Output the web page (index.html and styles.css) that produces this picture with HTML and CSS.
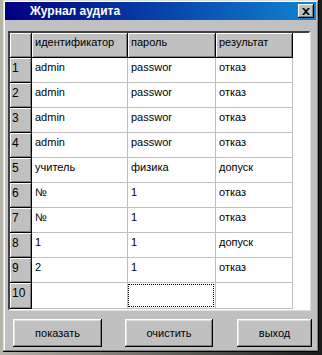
FILE: index.html
```html
<!DOCTYPE html>
<html lang="ru">
<head>
    <meta charset="UTF-8">
    <title>Журнал аудита</title>
    <link rel="stylesheet" href="styles.css">
</head>
<body>

    <div class="window">
        <div class="titlebar">
            <span class="title">Журнал аудита</span>
            <button class="close">
                <svg width="8" height="7" viewBox="0 0 8 7"><path d="M0 0h2l2 2 2-2h2L5 3.5 8 7H6L4 5 2 7H0l3-3.5z" fill="#000"/></svg>
            </button>
        </div>

        <div class="grid">
            <table>
                <tr>
                    <th class="num"></th>
                    <th class="c1">идентификатор</th>
                    <th class="c2">пароль</th>
                    <th class="c3">результат</th>
                </tr>
                <tr><th class="num">1</th><td>admin</td><td>passwor</td><td>отказ</td></tr>
                <tr><th class="num">2</th><td>admin</td><td>passwor</td><td>отказ</td></tr>
                <tr><th class="num">3</th><td>admin</td><td>passwor</td><td>отказ</td></tr>
                <tr><th class="num">4</th><td>admin</td><td>passwor</td><td>отказ</td></tr>
                <tr><th class="num">5</th><td>учитель</td><td>физика</td><td>допуск</td></tr>
                <tr><th class="num">6</th><td>№</td><td>1</td><td>отказ</td></tr>
                <tr><th class="num">7</th><td>№</td><td>1</td><td>отказ</td></tr>
                <tr><th class="num">8</th><td>1</td><td>1</td><td>допуск</td></tr>
                <tr><th class="num">9</th><td>2</td><td>1</td><td>отказ</td></tr>
                <tr><th class="num">10</th><td></td><td class="focus"><div></div></td><td></td></tr>
            </table>
        </div>

        <div class="buttons">
            <button class="btn b1">показать</button>
            <button class="btn b2">очистить</button>
            <button class="btn b3">выход</button>
        </div>
    </div>

</body>
</html>
```

FILE: styles.css
```css
body {
    margin: 0;
    height: 355px;
    overflow: hidden;
    background: linear-gradient(90deg, #b4b4a8 0, #b4b4a8 3px, #1c1c1c 319px);
    font-family: "Liberation Sans", Arial, sans-serif;
    font-size: 11px;
    color: #000;
}

.window {
    margin-left: 3px;
    width: 316px;
    height: 352px;
    box-sizing: border-box;
    padding: 2px 3px 3px 2px;
    background: #c0c0c0;
    box-shadow: inset -1px -1px #000, inset 1px 1px #dfdfdf, inset -2px -2px #808080, inset 2px 2px #fff;
}

.titlebar {
    height: 18px;
    display: flex;
    align-items: center;
    justify-content: space-between;
    padding: 0 2px 0 25px;
    background: linear-gradient(90deg, #000080, #1084d0);
}

.title {
    color: #fff;
    font-weight: bold;
    font-size: 12px;
}

.close {
    width: 16px;
    height: 14px;
    padding: 0;
    border: none;
    background: #c0c0c0;
    display: flex;
    align-items: center;
    justify-content: center;
    box-shadow: inset -1px -1px #000, inset 1px 1px #fff, inset -2px -2px #808080;
}

.grid {
    margin: 11px 0 0 3px;
    width: 302px;
    height: 279px;
    box-sizing: border-box;
    background: #fff;
    border-top: 2px solid #404040;
    border-left: 2px solid #404040;
    border-right: 1px solid #fff;
    border-bottom: 1px solid #fff;
    box-shadow: 1px 1px #dfdfdf;
    overflow: hidden;
}

table {
    border-collapse: separate;
    border-spacing: 0;
    table-layout: fixed;
}

th, td {
    height: 24px;
    padding: 3px 0 0 3px;
    box-sizing: border-box;
    vertical-align: top;
    text-align: left;
    font-weight: normal;
    white-space: nowrap;
    overflow: hidden;
}

th {
    background: #c0c0c0;
    border-right: 1px solid #000;
    border-bottom: 1px solid #000;
    box-shadow: inset 1px 1px #fff, inset -1px -1px #808080;
}

td {
    border-right: 1px solid #c0c0c0;
    border-bottom: 1px solid #c0c0c0;
}

th, td {
    height: 25px;
}

.num { width: 22px; padding-left: 2px; font-size: 12px; }
.c1 { width: 96px; }
.c2 { width: 88px; }
.c3 { width: 77px; }

.focus {
    padding: 1px 1px 1px 0;
}

.focus div {
    height: 21px;
    border: 1px dotted #000;
}

.buttons {
    display: flex;
    margin-top: 9px;
    padding-left: 8px;
}

.btn {
    height: 28px;
    padding: 0;
    border: none;
    background: #c0c0c0;
    font-family: "Liberation Sans", Arial, sans-serif;
    font-size: 11px;
    color: #000;
    box-shadow: inset -1px -1px #000, inset 1px 1px #fff, inset -2px -2px #808080, inset 2px 2px #dfdfdf;
}

.b1 { width: 89px; }
.b2 { width: 88px; margin-left: 23px; }
.b3 { width: 75px; margin-left: 24px; }
```
